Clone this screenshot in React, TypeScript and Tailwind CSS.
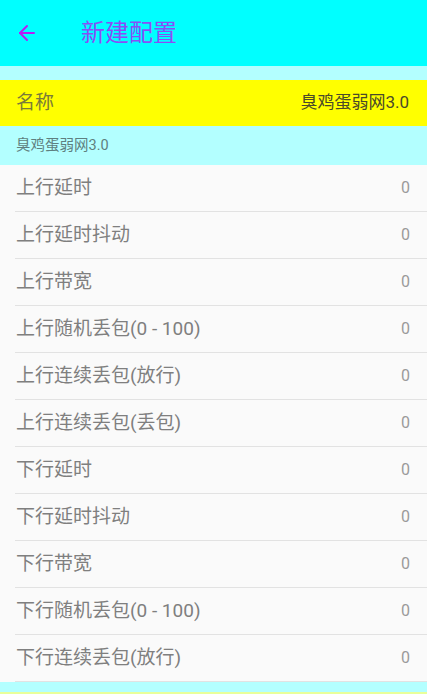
import { ArrowLeft } from 'lucide-react';

const rows = [
  '上行延时',
  '上行延时抖动',
  '上行带宽',
  '上行随机丢包(0 - 100)',
  '上行连续丢包(放行)',
  '上行连续丢包(丢包)',
  '下行延时',
  '下行延时抖动',
  '下行带宽',
  '下行随机丢包(0 - 100)',
  '下行连续丢包(放行)',
];

export default function App() {
  return (
    <div
      className="w-[427px] h-[694px] overflow-hidden bg-[#b3ffff] flex flex-col"
      style={{ fontFamily: 'Roboto, "Noto Sans CJK SC", sans-serif' }}
    >
      {/* Toolbar */}
      <div className="h-[66px] shrink-0 bg-[#00ffff] flex items-center">
        <ArrowLeft size={24} strokeWidth={2} className="ml-[15px] text-[#b81cf5]" />
        <span className="ml-[42px] text-[24px] text-[#8a4df7]">新建配置</span>
      </div>

      <div className="h-[14px] shrink-0" />

      {/* Name */}
      <div className="h-[46px] shrink-0 bg-[#ffff00] flex items-center justify-between pl-4 pr-[18px]">
        <span className="text-[19px] text-[#7a7a3a]">名称</span>
        <span className="text-[17px] text-[#4a4a2a]">臭鸡蛋弱网3.0</span>
      </div>

      <div className="h-[39px] shrink-0 flex items-center pl-4">
        <span className="text-[14.5px] text-[#5f7f80]">臭鸡蛋弱网3.0</span>
      </div>

      {/* Params */}
      <div className="shrink-0 bg-[#fafafa]">
        {rows.map(label => (
          <div key={label} className="pl-[15px]">
            <div className="h-[46px] flex items-center justify-between pr-[17px]">
              <span className="text-[19px] text-[#7f7f7f] pl-px">{label}</span>
              <span className="text-[16px] text-[#9a9a9a]">0</span>
            </div>
            <div className="h-px bg-[#e2e2e2]" />
          </div>
        ))}
      </div>

      <div className="h-[10px] shrink-0" />
      <div className="flex-1 bg-[#e8ff9a]" />
    </div>
  );
}
